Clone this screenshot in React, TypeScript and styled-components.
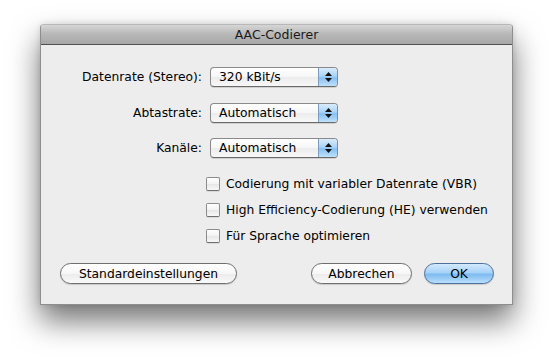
import React from 'react';
import styled, { createGlobalStyle } from 'styled-components';

const GlobalStyle = createGlobalStyle`
  html, body {
    margin: 0;
    padding: 0;
    background: #ffffff;
  }
  body {
    font-family: 'DejaVu Sans', 'Liberation Sans', sans-serif;
    font-size: 12.3px;
    color: #000;
  }
`;

const Page = styled.div`
  width: 552px;
  height: 359px;
  padding: 24px 0 0 40px;
  box-sizing: border-box;
  overflow: hidden;
`;

const Window = styled.div`
  width: 473px;
  height: 281px;
  box-sizing: border-box;
  display: flex;
  flex-direction: column;
  border: 1px solid #8e8e8e;
  border-top-color: #b8b8b8;
  border-radius: 4px 4px 0 0;
  background: #ededed;
  box-shadow: 0 16px 30px rgba(0, 0, 0, 0.55), 0 0 6px rgba(0, 0, 0, 0.12);
`;

const TitleBar = styled.div`
  height: 19px;
  display: flex;
  align-items: center;
  justify-content: center;
  border-bottom: 1px solid #505050;
  border-radius: 3px 3px 0 0;
  background: linear-gradient(#d6d6d6, #b9b9b9 45%, #a7a7a7);
  font-size: 12.5px;
  color: #1a1a1a;
`;

const Body = styled.div`
  flex: 1;
  display: flex;
  flex-direction: column;
  padding: 22px 18px 20px 19px;
`;

const FormGrid = styled.div`
  display: grid;
  grid-template-columns: 142px 128px;
  column-gap: 8px;
  row-gap: 15.5px;
`;

const Label = styled.label`
  display: flex;
  align-items: center;
  justify-content: flex-end;
  height: 20px;
  white-space: nowrap;
`;

const Popup = styled.div`
  height: 20px;
  box-sizing: border-box;
  display: flex;
  border: 1px solid #8a8a8a;
  border-bottom-color: #6a6a6a;
  border-radius: 4px;
  background: linear-gradient(#ffffff, #f6f6f6 50%, #ececec 51%, #f7f7f7);
  box-shadow: 0 1px 0 rgba(0, 0, 0, 0.12);
  overflow: hidden;
`;

const PopupValue = styled.div`
  flex: 1;
  display: flex;
  align-items: center;
  padding-left: 8px;
  white-space: nowrap;
`;

const PopupArrows = styled.div`
  width: 18px;
  display: flex;
  flex-direction: column;
  align-items: center;
  justify-content: center;
  gap: 2px;
  border-left: 1px solid #7d9cc0;
  background: linear-gradient(#d9ecfc, #a9d3f7 45%, #86c0f2 55%, #bfe1fb);
`;

const CheckList = styled.div`
  display: flex;
  flex-direction: column;
  margin: 13px 0 0 146px;
`;

const CheckRow = styled.label`
  height: 26px;
  display: flex;
  align-items: center;
  gap: 6px;
  white-space: nowrap;
`;

const Box = styled.span`
  width: 12px;
  height: 12px;
  flex: none;
  border: 1px solid #8c8c8c;
  border-bottom-color: #6f6f6f;
  border-radius: 2px;
  background: linear-gradient(#ffffff, #f2f2f2 50%, #e6e6e6 51%, #f8f8f8);
  box-shadow: 0 1px 0 rgba(0, 0, 0, 0.08);
`;

const ButtonRow = styled.div`
  display: flex;
  align-items: center;
  margin-top: 14px;
`;

const Spacer = styled.div`
  flex: 1;
`;

const Button = styled.button<{ $width: number; $primary?: boolean; $gap?: number }>`
  width: ${(p) => p.$width}px;
  height: 21px;
  margin-left: ${(p) => p.$gap ?? 0}px;
  padding: 0;
  box-sizing: border-box;
  border-radius: 11px;
  border: 1px solid ${(p) => (p.$primary ? '#4d6f9c' : '#6e6e6e')};
  background: ${(p) =>
    p.$primary
      ? 'linear-gradient(#d3e9fd, #a7d2f8 45%, #7fbbf1 55%, #b8dffb)'
      : 'linear-gradient(#ffffff, #f7f7f7 50%, #ebebeb 51%, #fafafa)'};
  box-shadow: 0 1px 1px rgba(0, 0, 0, 0.15);
  font-family: 'DejaVu Sans', 'Liberation Sans', sans-serif;
  font-size: 12.3px;
  color: #000;
`;

const Arrow = ({ up }: { up?: boolean }) => (
  <svg width="7" height="4" viewBox="0 0 7 4">
    <path d={up ? 'M3.5 0 L7 4 L0 4 Z' : 'M0 0 L7 0 L3.5 4 Z'} fill="#111" />
  </svg>
);

const Select = ({ value }: { value: string }) => (
  <Popup>
    <PopupValue>{value}</PopupValue>
    <PopupArrows>
      <Arrow up />
      <Arrow />
    </PopupArrows>
  </Popup>
);

const rows = [
  { label: 'Datenrate (Stereo):', value: '320 kBit/s' },
  { label: 'Abtastrate:', value: 'Automatisch' },
  { label: 'Kanäle:', value: 'Automatisch' }
];

const options = [
  'Codierung mit variabler Datenrate (VBR)',
  'High Efficiency-Codierung (HE) verwenden',
  'Für Sprache optimieren'
];

export default function App() {
  return (
    <>
      <GlobalStyle />
      <Page>
        <Window>
          <TitleBar>AAC-Codierer</TitleBar>
          <Body>
            <FormGrid>
              {rows.map((r) => (
                <React.Fragment key={r.label}>
                  <Label>{r.label}</Label>
                  <Select value={r.value} />
                </React.Fragment>
              ))}
            </FormGrid>
            <CheckList>
              {options.map((o) => (
                <CheckRow key={o}>
                  <Box />
                  {o}
                </CheckRow>
              ))}
            </CheckList>
            <ButtonRow>
              <Button $width={177}>Standardeinstellungen</Button>
              <Spacer />
              <Button $width={101}>Abbrechen</Button>
              <Button $width={70} $primary $gap={12}>
                OK
              </Button>
            </ButtonRow>
          </Body>
        </Window>
      </Page>
    </>
  );
}
